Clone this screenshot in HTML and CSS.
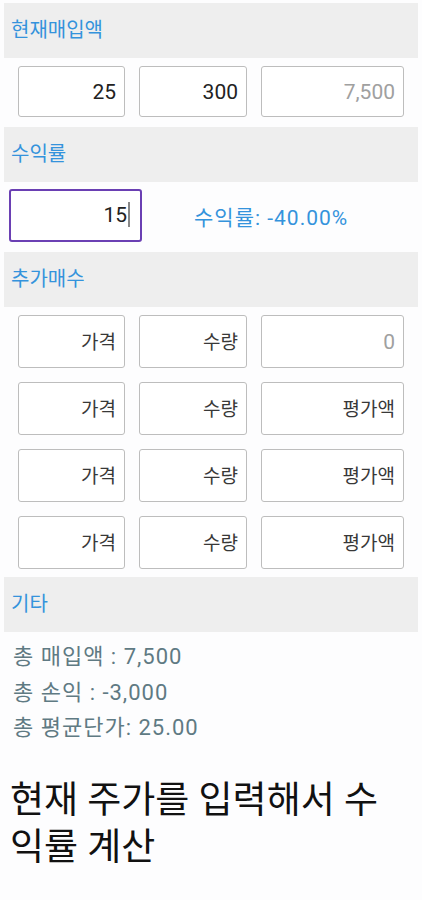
FILE: index.html
```html
<!DOCTYPE html>
<html lang="ko">
<head>
    <meta charset="utf-8">
    <title>수익률 계산</title>
    <link rel="stylesheet" href="styles.css">
</head>
<body>
<div class="screen">
    <div class="section">현재매입액</div>
    <div class="row_three first_row">
        <div class="field">25</div>
        <div class="field">300</div>
        <div class="field hint">7,500</div>
    </div>

    <div class="section">수익률</div>
    <div class="rate_row">
        <div class="field focused">15<span class="caret"></span></div>
        <div class="rate_label">수익률: -40.00%</div>
    </div>

    <div class="section">추가매수</div>
    <div class="buy_list">
        <div class="row_three">
            <div class="field label">가격</div>
            <div class="field label">수량</div>
            <div class="field hint">0</div>
        </div>
        <div class="row_three">
            <div class="field label">가격</div>
            <div class="field label">수량</div>
            <div class="field label">평가액</div>
        </div>
        <div class="row_three">
            <div class="field label">가격</div>
            <div class="field label">수량</div>
            <div class="field label">평가액</div>
        </div>
        <div class="row_three">
            <div class="field label">가격</div>
            <div class="field label">수량</div>
            <div class="field label">평가액</div>
        </div>
    </div>

    <div class="section">기타</div>
    <div class="summary">
        <div class="summary_line">총 매입액 : 7,500</div>
        <div class="summary_line">총 손익 : -3,000</div>
        <div class="summary_line">총 평균단가: 25.00</div>
    </div>

    <div class="guide">현재 주가를 입력해서 수익률 계산</div>
</div>
</body>
</html>
```

FILE: styles.css
```css
body {
    margin: 0;
    background-color: #fdfdfe;
    font-family: "Roboto", "Noto Sans CJK KR", sans-serif;
    color: #222222;
}

.screen {
    padding: 3px 4px 0 4px;
}

.section {
    height: 55px;
    line-height: 55px;
    padding-left: 7px;
    background-color: #eeeeee;
    color: #3493dc;
    font-size: 20px;
}

.row_three {
    display: grid;
    grid-template-columns: 107px 108px 143px;
    column-gap: 14px;
    padding-left: 14px;
}

.first_row {
    padding-top: 8px;
    padding-bottom: 10px;
}

.field {
    height: 51px;
    line-height: 51px;
    border: 1px solid #bdbdbd;
    border-radius: 3px;
    box-sizing: border-box;
    text-align: right;
    padding-right: 8px;
    font-size: 21px;
    color: #222222;
    background-color: #ffffff;
}

.field.hint {
    color: #a0a0a0;
}

.field.label {
    color: #383838;
    font-size: 19px;
}

.rate_row {
    display: flex;
    align-items: center;
    padding: 7px 0 10px 5px;
}

.field.focused {
    width: 133px;
    height: 53px;
    line-height: 49px;
    border: 2px solid #6a3fb3;
    padding-right: 10px;
}

.caret {
    display: inline-block;
    width: 2px;
    height: 25px;
    margin-left: 1px;
    vertical-align: -5px;
    background-color: #888888;
}

.rate_label {
    margin-left: 52px;
    font-size: 21px;
    letter-spacing: 1px;
    color: #3493dc;
}

.buy_list {
    display: flex;
    flex-direction: column;
    row-gap: 14px;
    padding: 8px 0 8px 0;
}

.buy_list .field {
    height: 53px;
    line-height: 53px;
}

.summary {
    padding: 7px 0 0 9px;
}

.summary_line {
    height: 35.5px;
    line-height: 35.5px;
    font-size: 22px;
    letter-spacing: 1px;
    color: #5f7a83;
}

.guide {
    margin-top: 31px;
    padding: 0 20px 0 6px;
    font-size: 37px;
    line-height: 47px;
    color: #111111;
}
```
